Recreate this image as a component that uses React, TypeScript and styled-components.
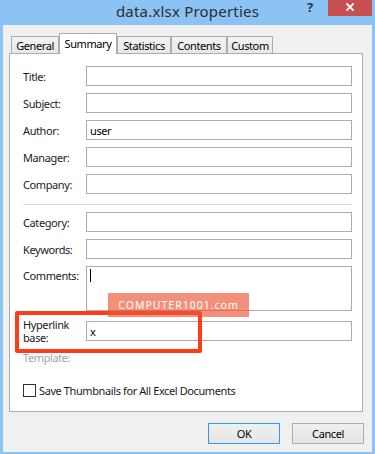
import React from 'react'
import styled, { createGlobalStyle, css } from 'styled-components'

const UI_FONT = `"Noto Sans", "Open Sans", Arial, sans-serif`

const GlobalStyle = createGlobalStyle`
  html, body {
    margin: 0;
    padding: 0;
    background: #8ac3f4;
  }
`

type Field = {
  label: React.ReactNode
  value?: string
}

const GENERAL_FIELDS: Field[] = [
  { label: 'Title:' },
  { label: 'Subject:' },
  { label: 'Author:', value: 'user' },
  { label: 'Manager:' },
  { label: 'Company:' },
]

const TABS = [
  { name: 'General', width: 48 },
  { name: 'Summary', width: 58 },
  { name: 'Statistics', width: 54 },
  { name: 'Contents', width: 56 },
  { name: 'Custom', width: 46 },
]

const App = () => {
  return (
    <>
      <GlobalStyle />
      <Window>
        <TitleBar>
          <Title>data.xlsx Properties</Title>
          <Controls>
            <Help>?</Help>
            <CloseButton aria-label="Close">
              <svg width="8" height="8" viewBox="0 0 8 8">
                <path d="M1 1 L7 7 M7 1 L1 7" stroke="#fff" strokeWidth="1.8" strokeLinecap="square" />
              </svg>
            </CloseButton>
          </Controls>
        </TitleBar>

        <Client>
          <TabRow>
            {TABS.map((tab) => (
              <Tab key={tab.name} $width={tab.width} $active={tab.name === 'Summary'}>
                {tab.name}
              </Tab>
            ))}
          </TabRow>

          <Panel>
            <FieldGrid>
              {GENERAL_FIELDS.map((field, i) => (
                <React.Fragment key={i}>
                  <Label>{field.label}</Label>
                  <TextBox>{field.value}</TextBox>
                </React.Fragment>
              ))}
            </FieldGrid>

            <Divider />

            <FieldGrid>
              <Label>Category:</Label>
              <TextBox />
              <Label>Keywords:</Label>
              <TextBox />
              <Label $top={3}>Comments:</Label>
              <TextBox $tall>
                <Caret />
              </TextBox>
              <Label $top={0}>
                Hyperlink
                <br />
                base:
              </Label>
              <TextBox $offset={3}>x</TextBox>
              <Label $disabled>Template:</Label>
              <span />
            </FieldGrid>

            <CheckRow>
              <CheckBox />
              <CheckLabel>Save Thumbnails for All Excel Documents</CheckLabel>
            </CheckRow>
          </Panel>

          <ButtonRow>
            <Button $primary>OK</Button>
            <Button>Cancel</Button>
          </ButtonRow>
        </Client>

        <Highlight />
        <Watermark>COMPUTER1001.com</Watermark>
      </Window>
    </>
  )
}

export default App

const Window = styled.div`
  position: relative;
  display: flex;
  flex-direction: column;
  width: 375px;
  height: 454px;
  overflow: hidden;
  background: #8ac3f4;
  font-family: ${UI_FONT};
`

/* title and window buttons share one grid cell: title centred, buttons at the end */
const TitleBar = styled.div`
  display: grid;
  grid-template-areas: 'bar';
  align-items: start;
  height: 25px;
  flex-shrink: 0;

  & > * {
    grid-area: bar;
  }
`

const Title = styled.div`
  justify-self: center;
  font-size: 15px;
  letter-spacing: 0.2px;
  line-height: 22px;
  color: #2e2e2e;
  white-space: nowrap;
`

const Controls = styled.div`
  display: flex;
  justify-self: end;
  align-items: flex-start;
  padding-right: 3px;
`

const Help = styled.span`
  width: 12px;
  margin-right: 12px;
  font-size: 13px;
  font-weight: 700;
  line-height: 14px;
  color: #333;
  text-align: center;
`

const CloseButton = styled.div`
  display: flex;
  align-items: center;
  justify-content: center;
  width: 44px;
  height: 16px;
  padding-bottom: 3px;
  box-sizing: border-box;
  background: #c75050;
`

const Client = styled.div`
  flex: 1;
  display: flex;
  flex-direction: column;
  margin: 0 3px 2px;
  padding-top: 8px;
  background: #f0f0f0;
  font-size: 11px;
  letter-spacing: -0.4px;
`

const TabRow = styled.div`
  display: flex;
  align-items: flex-end;
  height: 20px;
  margin-left: 8px;
`

const Tab = styled.div<{ $width: number; $active?: boolean }>`
  position: relative;
  display: flex;
  align-items: center;
  justify-content: center;
  width: ${({ $width }) => $width}px;
  height: 17px;
  box-sizing: border-box;
  border: 1px solid #acacac;
  border-bottom: none;
  background: linear-gradient(#f2f2f2, #e8e8e8);
  color: #000;
  white-space: nowrap;

  ${({ $active }) =>
    $active &&
    css`
      z-index: 2;
      height: 21px;
      margin-bottom: -1px;
      padding-bottom: 2px;
      background: #fff;
    `}
`

const Panel = styled.div`
  display: flex;
  flex-direction: column;
  height: 359px;
  margin: 0 9px 0 6px;
  padding: 12px 10px 0 13px;
  box-sizing: border-box;
  border: 1px solid #acacac;
  background: #fff;
`

const FieldGrid = styled.div`
  display: grid;
  grid-template-columns: 63px 1fr;
  row-gap: 7px;
  align-items: center;
`

const Label = styled.div<{ $top?: number; $disabled?: boolean }>`
  line-height: 13px;
  white-space: nowrap;
  color: ${({ $disabled }) => ($disabled ? '#a3a3a3' : '#1a1a1a')};
  ${({ $top }) => $top !== undefined && `align-self: start; padding-top: ${$top}px;`}
`

const TextBox = styled.div<{ $tall?: boolean; $offset?: number }>`
  display: flex;
  align-items: ${({ $tall }) => ($tall ? 'flex-start' : 'center')};
  height: ${({ $tall }) => ($tall ? 45 : 20)}px;
  padding: ${({ $tall }) => ($tall ? '2px 3px' : '0 3px')};
  box-sizing: border-box;
  border: 1px solid #acacac;
  background: #fff;
  color: #000;
  ${({ $offset }) => $offset !== undefined && `align-self: start; margin-top: ${$offset}px;`}
`

const Caret = styled.span`
  width: 1px;
  height: 13px;
  background: #000;
`

const Divider = styled.div`
  height: 1px;
  margin: 10px 0 7px;
  background: #dcdcdc;
`

const CheckRow = styled.div`
  display: flex;
  align-items: center;
  gap: 3px;
  margin-top: 20px;
`

const CheckBox = styled.span`
  width: 13px;
  height: 13px;
  box-sizing: border-box;
  border: 1px solid #333;
  background: #fff;
`

const CheckLabel = styled.span`
  line-height: 13px;
  color: #1a1a1a;
`

const ButtonRow = styled.div`
  display: flex;
  justify-content: flex-end;
  gap: 12px;
  margin-top: 11px;
  padding-right: 8px;
`

const Button = styled.div<{ $primary?: boolean }>`
  display: flex;
  align-items: center;
  justify-content: center;
  width: 72px;
  height: 21px;
  box-sizing: border-box;
  border: 1px solid ${({ $primary }) => ($primary ? '#3399ff' : '#acacac')};
  background: linear-gradient(#f0f0f0, #e5e5e5);
  color: #000;
`

const Highlight = styled.div`
  position: absolute;
  left: 15px;
  top: 311px;
  width: 187px;
  height: 42px;
  box-sizing: border-box;
  border: 4px solid #ff3c18;
  border-radius: 2px;
`

const Watermark = styled.div`
  position: absolute;
  left: 108px;
  top: 293px;
  display: flex;
  align-items: center;
  justify-content: center;
  width: 141px;
  height: 24px;
  background: rgba(236, 86, 56, 0.66);
  font-size: 10.5px;
  letter-spacing: 1px;
  color: #fff;
`
